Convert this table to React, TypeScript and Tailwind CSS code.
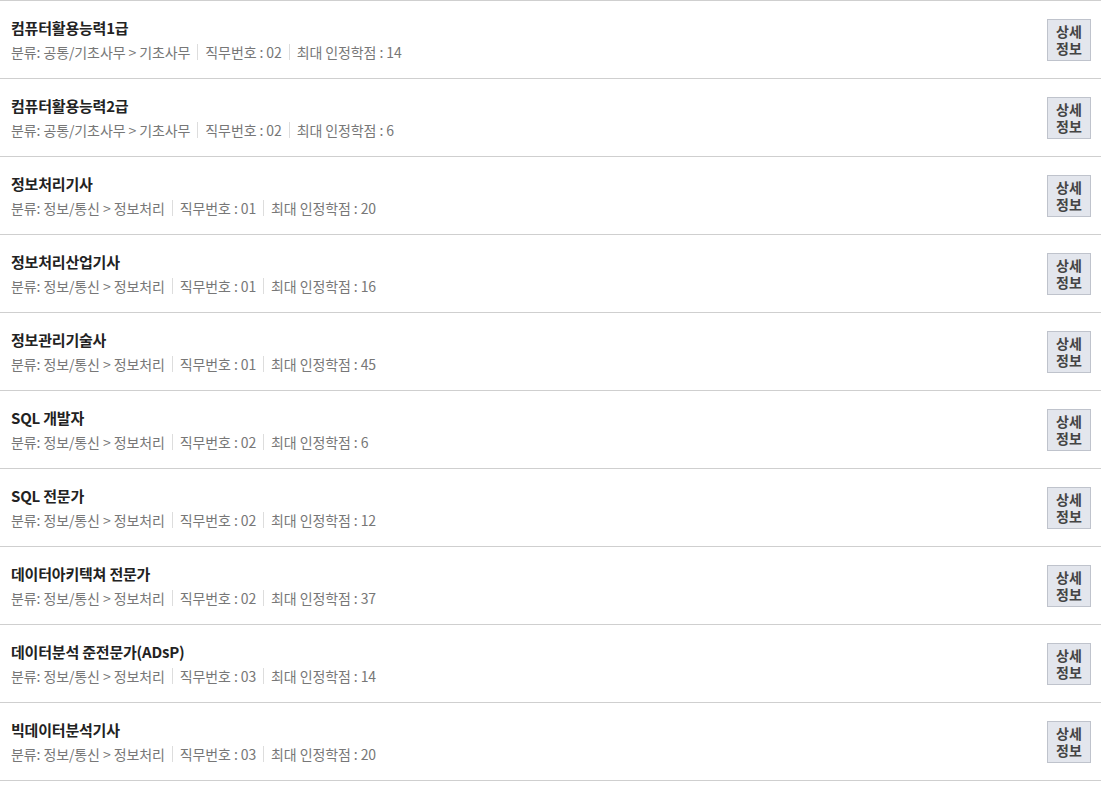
import React from "react";

const items = [
  { t: "컴퓨터활용능력1급", c: "공통/기초사무 > 기초사무", n: "02", s: "14" },
  { t: "컴퓨터활용능력2급", c: "공통/기초사무 > 기초사무", n: "02", s: "6" },
  { t: "정보처리기사", c: "정보/통신 > 정보처리", n: "01", s: "20" },
  { t: "정보처리산업기사", c: "정보/통신 > 정보처리", n: "01", s: "16" },
  { t: "정보관리기술사", c: "정보/통신 > 정보처리", n: "01", s: "45" },
  { t: "SQL 개발자", c: "정보/통신 > 정보처리", n: "02", s: "6" },
  { t: "SQL 전문가", c: "정보/통신 > 정보처리", n: "02", s: "12" },
  { t: "데이터아키텍쳐 전문가", c: "정보/통신 > 정보처리", n: "02", s: "37" },
  { t: "데이터분석 준전문가(ADsP)", c: "정보/통신 > 정보처리", n: "03", s: "14" },
  { t: "빅데이터분석기사", c: "정보/통신 > 정보처리", n: "03", s: "20" },
];

export default function App() {
  return (
    <div
      className="bg-white w-[1108px] h-[785px]"
      style={{ fontFamily: '"Noto Sans CJK KR", "Noto Sans", sans-serif' }}
    >
      <ul className="w-[1101px] border-t border-[#cfcfcf]">
        {items.map((it, i) => (
          <li
            key={i}
            className="h-[78px] border-b border-[#cfcfcf] flex items-center justify-between pl-[11px] pr-[10px]"
          >
            <div className="flex flex-col">
              <div className="text-[15px] leading-[20px] font-bold text-[#222] tracking-[-0.2px]">{it.t}</div>
              <div className="mt-[4px] flex items-center text-[14px] leading-[20px] text-[#777] tracking-[-0.1px]">
                <span>분류: {it.c}</span>
                <span className="mx-[7px] w-px h-[16px] bg-[#dddddd]" />
                <span>직무번호 : {it.n}</span>
                <span className="mx-[7px] w-px h-[16px] bg-[#dddddd]" />
                <span>최대 인정학점 : {it.s}</span>
              </div>
            </div>
            <button className="w-[44px] h-[42px] bg-[#e3e6ed] border border-[#bfc3cc] text-[14px] leading-[17px] font-bold text-[#444] flex flex-col items-center justify-center">
              <span>상세</span>
              <span>정보</span>
            </button>
          </li>
        ))}
      </ul>
    </div>
  );
}
